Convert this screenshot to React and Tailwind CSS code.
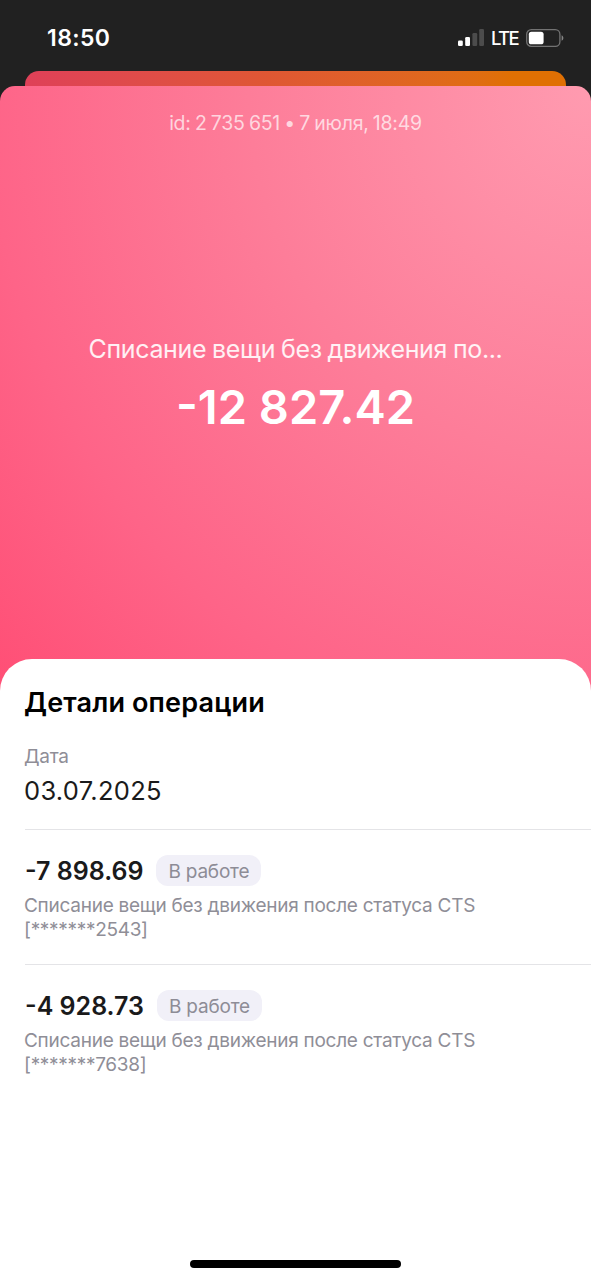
const OPERATIONS = [
  { amount: '-7 898.69', status: 'В работе', reason: 'Списание вещи без движения после статуса CTS', code: '[*******2543]' },
  { amount: '-4 928.73', status: 'В работе', reason: 'Списание вещи без движения после статуса CTS', code: '[*******7638]' },
];

function SignalIcon() {
  return (
    <svg width="27" height="18" viewBox="0 0 27 18" className="shrink-0">
      <rect x="0" y="11.5" width="4.8" height="5.5" rx="1.3" fill="#fff" />
      <rect x="7.2" y="8" width="4.8" height="9" rx="1.3" fill="#fff" />
      <rect x="14.4" y="4" width="4.8" height="13" rx="1.3" fill="#4c4c4c" />
      <rect x="21.2" y="0" width="4.8" height="17" rx="1.3" fill="#4c4c4c" />
    </svg>
  );
}

function BatteryIcon() {
  return (
    <svg width="38" height="18" viewBox="0 0 38 18" className="shrink-0">
      <rect x="0.7" y="0.7" width="33.2" height="16.6" rx="4.6" fill="none" stroke="#737373" strokeWidth="1.3" />
      <rect x="2.8" y="2.7" width="14.8" height="12.6" rx="2.6" fill="#fff" />
      <path d="M35.6 6.2c1.1.5 1.8 1.6 1.8 2.8s-.7 2.3-1.8 2.8z" fill="#858585" />
    </svg>
  );
}

function StatusBar() {
  return (
    <div className="flex h-[71px] shrink-0 items-start justify-between pl-[47px] pr-[27px] pt-[26px] text-white">
      <span className="text-[23px] font-semibold leading-6 tracking-[0.4px]">18:50</span>
      <div className="flex h-6 items-center">
        <SignalIcon />
        <span className="ml-[6px] w-[28px] whitespace-nowrap text-[18.5px] font-medium leading-6 tracking-[-1.6px]">LTE</span>
        <span className="ml-[7px] flex"><BatteryIcon /></span>
      </div>
    </div>
  );
}

function Operation({ item }) {
  return (
    <li className="h-[135px] border-t border-[#e4e4e7] pt-[26px]">
      <div className="flex items-center gap-[13px]">
        <span className="whitespace-pre text-[25px] font-semibold leading-[30px] text-[#1a1a1b]">{item.amount}</span>
        <span className="-mt-px flex h-[31px] items-center rounded-[12px] bg-[#f1f0f8] px-3 pt-[3px] text-[19px] tracking-[-0.2px] text-[#8d8c96]">
          {item.status}
        </span>
      </div>
      <p className="-ml-px mt-[8px] text-[19px] leading-6 tracking-[-0.26px] text-[#8f8e97]">
        {item.reason}
        <br />
        <span className="tracking-[-0.3px]">{item.code}</span>
      </p>
    </li>
  );
}

export default function App() {
  return (
    <div className="flex h-[1280px] w-[591px] flex-col overflow-hidden bg-[#212121] font-['Inter',sans-serif]">
      <StatusBar />

      {/* Edge of the card underneath */}
      <div className="mx-[25px] h-[32px] shrink-0 rounded-t-[14px] bg-linear-to-r from-[#df4058] via-[#df5733] via-45% to-[#e07003] to-90%" />

      {/* Summary card */}
      <section className="-mt-[17px] flex h-[620px] shrink-0 flex-col items-center rounded-t-[15px] bg-[radial-gradient(ellipse_138%_144%_at_100%_0%,#ff9bb0_0%,#fd7d99_42%,#fe6488_74%,#ff4c73_102%)] text-white">
        <p className="mt-[25px] text-[19.5px] leading-6 tracking-[-0.25px] [word-spacing:-1px] text-white/70">id: 2 735 651 • 7 июля, 18:49</p>
        <p className="mt-[199px] text-[25px] leading-[30px] tracking-[-0.35px] [word-spacing:-0.8px] text-white/90">Списание вещи без движения по...</p>
        <p className="mt-[14px] text-[47px] font-semibold leading-[58px]">-12 827.42</p>
      </section>

      {/* Details sheet */}
      <main className="-mt-[47px] flex flex-1 flex-col rounded-t-[32px] bg-white pl-[25px]">
        <h1 className="-ml-px mt-[27px] text-[27px] font-semibold leading-[34px] tracking-[0.15px] text-black">Детали операции</h1>
        <p className="-ml-px mt-[25px] text-[19px] leading-6 tracking-[-0.3px] text-[#8f8e97]">Дата</p>
        <p className="-ml-px mt-[6px] text-[25.5px] leading-[32px] tracking-[0.3px] text-[#1a1a1b]">03.07.2025</p>
        <ul className="mt-[22px]">
          {OPERATIONS.map((item) => <Operation key={item.code} item={item} />)}
        </ul>
        <div className="mb-[12px] ml-[165px] mt-auto h-2 w-[211px] rounded-full bg-black" />
      </main>
    </div>
  );
}
